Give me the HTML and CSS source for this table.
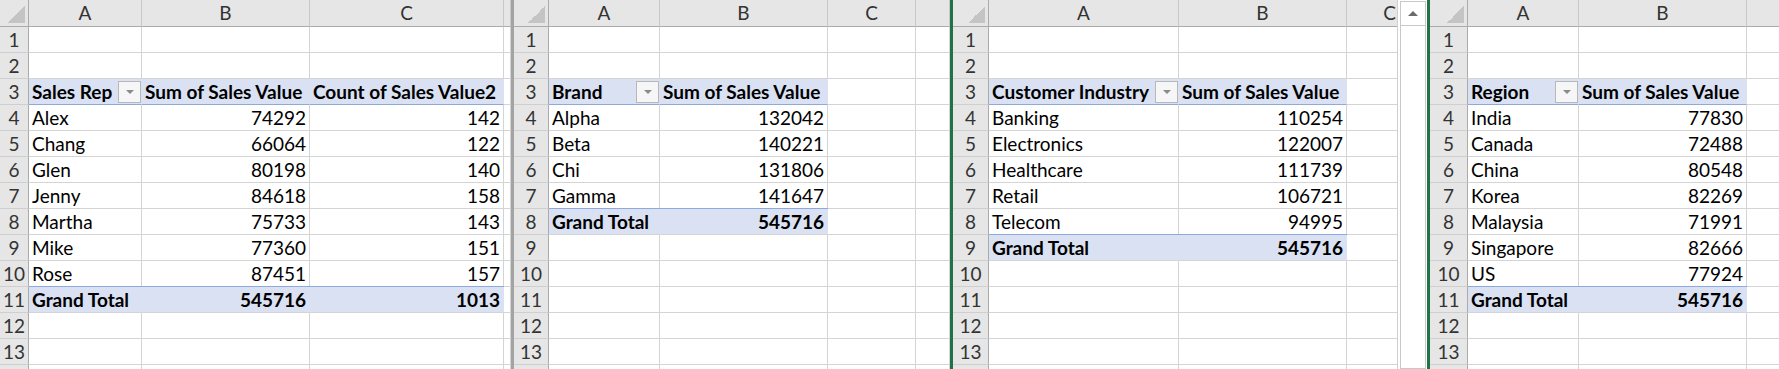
FILE: index.html
```html
<!DOCTYPE html>
<html>
<head>
<meta charset="utf-8">
<link rel="stylesheet" href="styles.css">
</head>
<body>
<div class="app">
  <section class="win w1">
    <div class="sheet s1">
      <div class="corner"></div><div class="ch">A</div><div class="ch">B</div><div class="ch">C</div><div class="ch"></div>
      <div class="rh">1</div><div></div><div></div><div></div><div></div>
      <div class="rh">2</div><div></div><div></div><div></div><div></div>
      <div class="rh">3</div><div class="ph f"><span class="t">Sales Rep</span><span class="btn"></span></div><div class="ph">Sum of Sales Value</div><div class="ph">Count of Sales Value2</div><div></div>
      <div class="rh">4</div><div>Alex</div><div class="n">74292</div><div class="n">142</div><div></div>
      <div class="rh">5</div><div>Chang</div><div class="n">66064</div><div class="n">122</div><div></div>
      <div class="rh">6</div><div>Glen</div><div class="n">80198</div><div class="n">140</div><div></div>
      <div class="rh">7</div><div>Jenny</div><div class="n">84618</div><div class="n">158</div><div></div>
      <div class="rh">8</div><div>Martha</div><div class="n">75733</div><div class="n">143</div><div></div>
      <div class="rh">9</div><div>Mike</div><div class="n">77360</div><div class="n">151</div><div></div>
      <div class="rh">10</div><div>Rose</div><div class="n">87451</div><div class="n">157</div><div></div>
      <div class="rh">11</div><div class="gt">Grand Total</div><div class="gt n">545716</div><div class="gt n">1013</div><div></div>
      <div class="rh">12</div><div></div><div></div><div></div><div></div>
      <div class="rh">13</div><div></div><div></div><div></div><div></div>
      <div class="rh"></div><div></div><div></div><div></div><div></div>
    </div>
  </section>
  <div class="split"></div>
  <section class="win w2">
    <div class="sheet s2">
      <div class="corner"></div><div class="ch">A</div><div class="ch">B</div><div class="ch">C</div><div class="ch"></div>
      <div class="rh">1</div><div></div><div></div><div></div><div></div>
      <div class="rh">2</div><div></div><div></div><div></div><div></div>
      <div class="rh">3</div><div class="ph f"><span class="t">Brand</span><span class="btn"></span></div><div class="ph">Sum of Sales Value</div><div></div><div></div>
      <div class="rh">4</div><div>Alpha</div><div class="n">132042</div><div></div><div></div>
      <div class="rh">5</div><div>Beta</div><div class="n">140221</div><div></div><div></div>
      <div class="rh">6</div><div>Chi</div><div class="n">131806</div><div></div><div></div>
      <div class="rh">7</div><div>Gamma</div><div class="n">141647</div><div></div><div></div>
      <div class="rh">8</div><div class="gt">Grand Total</div><div class="gt n">545716</div><div></div><div></div>
      <div class="rh">9</div><div></div><div></div><div></div><div></div>
      <div class="rh">10</div><div></div><div></div><div></div><div></div>
      <div class="rh">11</div><div></div><div></div><div></div><div></div>
      <div class="rh">12</div><div></div><div></div><div></div><div></div>
      <div class="rh">13</div><div></div><div></div><div></div><div></div>
      <div class="rh"></div><div></div><div></div><div></div><div></div>
    </div>
  </section>
  <section class="win w3">
    <div class="sheet s3">
      <div class="corner"></div><div class="ch">A</div><div class="ch">B</div><div class="ch">C</div>
      <div class="rh">1</div><div></div><div></div><div></div>
      <div class="rh">2</div><div></div><div></div><div></div>
      <div class="rh">3</div><div class="ph f"><span class="t">Customer Industry</span><span class="btn"></span></div><div class="ph">Sum of Sales Value</div><div></div>
      <div class="rh">4</div><div>Banking</div><div class="n">110254</div><div></div>
      <div class="rh">5</div><div>Electronics</div><div class="n">122007</div><div></div>
      <div class="rh">6</div><div>Healthcare</div><div class="n">111739</div><div></div>
      <div class="rh">7</div><div>Retail</div><div class="n">106721</div><div></div>
      <div class="rh">8</div><div>Telecom</div><div class="n">94995</div><div></div>
      <div class="rh">9</div><div class="gt">Grand Total</div><div class="gt n">545716</div><div></div>
      <div class="rh">10</div><div></div><div></div><div></div>
      <div class="rh">11</div><div></div><div></div><div></div>
      <div class="rh">12</div><div></div><div></div><div></div>
      <div class="rh">13</div><div></div><div></div><div></div>
      <div class="rh"></div><div></div><div></div><div></div>
    </div>
    <div class="vsb">
      <div class="up"></div>
      <div class="thumb"></div>
    </div>
  </section>
  <section class="win w4">
    <div class="sheet s4">
      <div class="corner"></div><div class="ch">A</div><div class="ch">B</div><div class="ch"></div>
      <div class="rh">1</div><div></div><div></div><div></div>
      <div class="rh">2</div><div></div><div></div><div></div>
      <div class="rh">3</div><div class="ph f"><span class="t">Region</span><span class="btn"></span></div><div class="ph">Sum of Sales Value</div><div></div>
      <div class="rh">4</div><div>India</div><div class="n">77830</div><div></div>
      <div class="rh">5</div><div>Canada</div><div class="n">72488</div><div></div>
      <div class="rh">6</div><div>China</div><div class="n">80548</div><div></div>
      <div class="rh">7</div><div>Korea</div><div class="n">82269</div><div></div>
      <div class="rh">8</div><div>Malaysia</div><div class="n">71991</div><div></div>
      <div class="rh">9</div><div>Singapore</div><div class="n">82666</div><div></div>
      <div class="rh">10</div><div>US</div><div class="n">77924</div><div></div>
      <div class="rh">11</div><div class="gt">Grand Total</div><div class="gt n">545716</div><div></div>
      <div class="rh">12</div><div></div><div></div><div></div>
      <div class="rh">13</div><div></div><div></div><div></div>
      <div class="rh"></div><div></div><div></div><div></div>
    </div>
  </section>
</div>
</body>
</html>
```
FILE: styles.css
```css
* { box-sizing: border-box; }
html, body { margin: 0; padding: 0; background: #fff; }
body {
  font-family: Lato, "Noto Sans", sans-serif;
  font-size: 19px;
  color: #000;
  overflow: hidden;
}
.app {
  display: flex;
  width: 1779px;
  height: 369px;
  overflow: hidden;
}
.win { flex: none; height: 369px; overflow: hidden; }
.w1 { width: 511px; }
.split { flex: none; width: 3px; background: #a3a3a3; }
.w2 { width: 436px; }
.w3 {
  width: 480px;
  display: flex;
  border-left: 3px solid #217346;
  border-right: 3px solid #217346;
}
.w4 { flex: 1; }

.sheet {
  display: grid;
  grid-template-rows: 27px;
  grid-auto-rows: 26px;
  height: 369px;
  overflow: hidden;
}
.s1 { grid-template-columns: 29px 113px 168px 194px 7px; }
.s2 { grid-template-columns: 35px 111px 168px 88px 34px; }
.s3 { width: 444px; flex: none; grid-template-columns: 36px 190px 168px 86px; }
.s4 { grid-template-columns: 38px 111px 168px 40px; }

.sheet > div {
  border-right: 1px solid #d4d4d4;
  border-bottom: 1px solid #d4d4d4;
  padding: 0 3px;
  line-height: 25px;
  white-space: nowrap;
  overflow: hidden;
}
.sheet > .ch {
  background: #e6e6e6;
  color: #333;
  text-align: center;
  padding: 0;
  line-height: 26px;
  border-right-color: #c8c8c8;
  border-bottom-color: #ababab;
}
.sheet > .corner {
  background:
    linear-gradient(to bottom right, transparent 50%, #c4c4c4 50%) right 3px bottom 3px / 17px 17px no-repeat,
    #e6e6e6;
  border-right-color: #ababab;
  border-bottom-color: #ababab;
}
.sheet > .rh {
  background: #e6e6e6;
  color: #333;
  text-align: center;
  padding: 0;
  border-right-color: #ababab;
  border-bottom-color: #cfcfcf;
}
.sheet > .n { text-align: right; }
.sheet > .ph {
  background: #d9e1f2;
  font-weight: 700;
  border-right-color: #d9e1f2;
  border-bottom-color: #8ea9db;
}
.sheet > .gt {
  background: #d9e1f2;
  font-weight: 700;
  border-right-color: #d9e1f2;
  box-shadow: 0 -1px 0 #8ea9db;
}
.sheet > .f {
  display: flex;
  align-items: center;
  padding: 0 0 0 3px;
}
.f .t { flex: 1; min-width: 0; overflow: hidden; }
.btn {
  flex: none;
  width: 23px;
  height: 22px;
  border: 1px solid #b8b8b8;
  background: #f6f6f6;
  display: flex;
  align-items: center;
  justify-content: center;
}
.btn::before {
  content: "";
  border-left: 4px solid transparent;
  border-right: 4px solid transparent;
  border-top: 4px solid #8a8a8a;
}

.vsb {
  flex: none;
  width: 30px;
  height: 369px;
  border-left: 1px solid #d0d0d0;
  padding: 1px 1px 0 2px;
  display: flex;
  flex-direction: column;
  background: #fff;
}
.up {
  flex: none;
  height: 25px;
  border: 1px solid #c8c8c8;
  display: flex;
  align-items: center;
  justify-content: center;
}
.up::before {
  content: "";
  border-left: 5px solid transparent;
  border-right: 5px solid transparent;
  border-bottom: 5px solid #6b6b6b;
}
.thumb {
  flex: 1;
  border: 1px solid #c8c8c8;
  border-top: none;
}
```
